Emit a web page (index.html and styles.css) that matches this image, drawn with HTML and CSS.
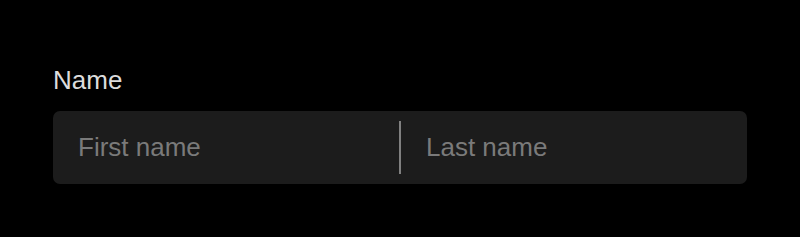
FILE: index.html
```html
<!DOCTYPE html>
<html lang="en">
<head>
    <meta charset="UTF-8">
    <meta name="viewport" content="width=device-width, initial-scale=1.0">
    <title>Name</title>
    <link rel="stylesheet" href="styles.css">
</head>
<body>
    <main class="form">
        <label class="field-label" for="firstName">Name</label>
        <div class="name-box">
            <input class="name-input" id="firstName" type="text" placeholder="First name">
            <span class="divider"></span>
            <input class="name-input" id="lastName" type="text" placeholder="Last name">
        </div>
    </main>
</body>
</html>
```

FILE: styles.css
```css
body {
    margin: 0;
    padding: 0;
    background-color: #000;
    font-family: "Liberation Sans", Arial, sans-serif;
}
.form {
    padding: 64px 53px 0 53px;
}
.field-label {
    display: block;
    color: #dcdcdc;
    font-size: 26px;
    line-height: 32px;
    margin-bottom: 15px;
}
.name-box {
    display: flex;
    align-items: center;
    height: 73px;
    background-color: #1c1c1c;
    border-radius: 7px;
}
.name-input {
    flex: 1;
    min-width: 0;
    height: 100%;
    background: transparent;
    border: none;
    outline: none;
    padding: 0 25px;
    color: #ddd;
    font-family: inherit;
    font-size: 26px;
}
.name-input::placeholder {
    color: #7a7a7a;
}
.divider {
    width: 2px;
    height: 53px;
    background-color: #808080;
}
```
